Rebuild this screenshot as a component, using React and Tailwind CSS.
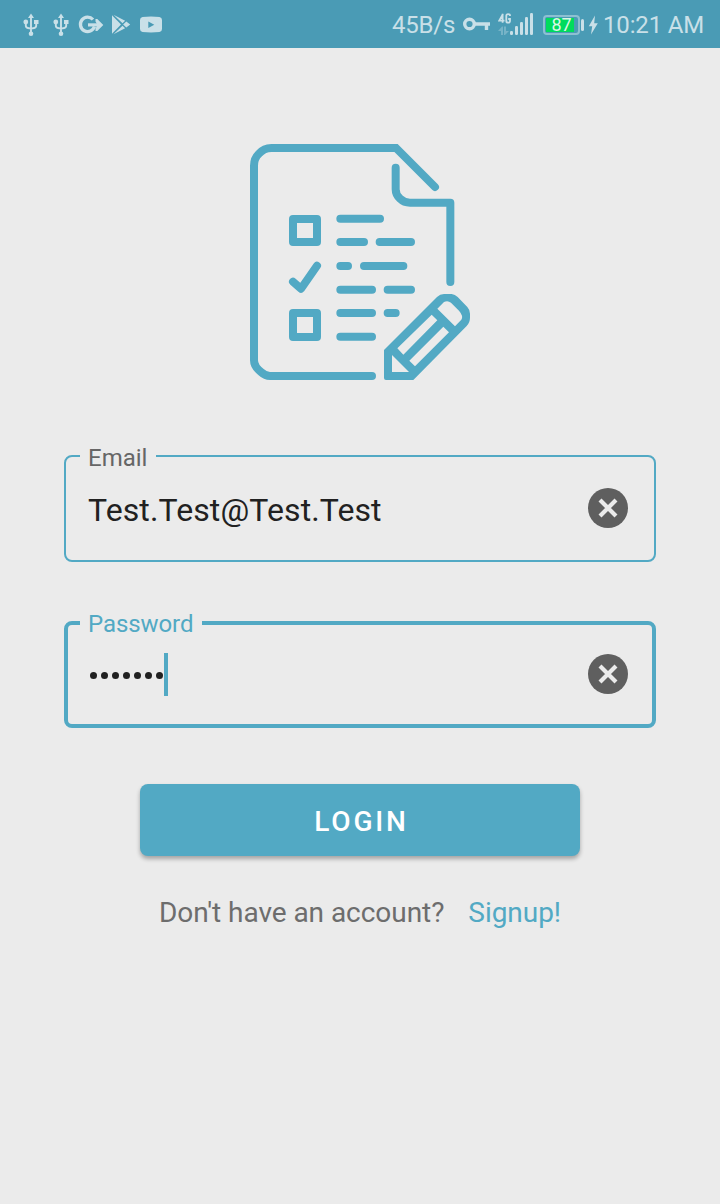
function UsbIcon() {
  return (
    <svg className="h-6 w-[30px]" viewBox="0 0 30 24" fill="none" stroke="currentColor" strokeWidth="1.9">
      <path d="M15 3v18M9.8 9v3.5q0 2.200 2 2.500l3.200.6 3.200-.6q2-.3 2-2.500V9" />
      <path d="M15 .6l3 4.400h-6z" fill="currentColor" stroke="none" />
      <circle cx="9.800" cy="9" r="2.400" fill="currentColor" stroke="none" />
      <path d="M18 7h4.500v4H18z" fill="currentColor" stroke="none" />
      <circle cx="15" cy="20.800" r="2.300" fill="currentColor" stroke="none" />
    </svg>
  );
}

function StatusBar() {
  return (
    <header className="flex h-12 items-center justify-between bg-[#4a9bb5] pl-4 pr-4 text-[#c9e0e8]">
      <div className="flex h-full items-center pt-0.5">
        <UsbIcon />
        <UsbIcon />
        <svg className="h-6 w-[30px]" viewBox="0 0 30 24">
          <path d="M17 6.500A7.200 7.200 0 1 0 18.500 13.500" fill="none" stroke="currentColor" strokeWidth="3.300" />
          <path d="M12 11.900H22" fill="none" stroke="currentColor" strokeWidth="3.200" />
          <path d="M19.500 6h1.800l6 6-6 6h-1.800v-2.500l2-3.500-2-3.500z" fill="currentColor" />
        </svg>
        <svg className="h-6 w-[30px]" viewBox="0 0 30 24" fill="currentColor">
          <path d="M6 2.200v18.600L15 11.500zM7.500 1.800l9 8.400 2.600-2.400zM7.500 21.200l9-8.400 2.600 2.400zM20.300 8.600l-3.200 2.900 3.200 2.900 3.900-2.900z" />
        </svg>
        <svg className="h-6 w-[30px]" viewBox="0 0 30 24">
          <path fillRule="evenodd" fill="currentColor" d="M6.500 4Q15 2.800 23.500 4q2.500.3 2.500 3v9q0 2.600-2.500 3-8.500.8-17 0Q4 18.600 4 16V7q0-2.700 2.500-3zM12.300 8.500v6.500l6-3.200z" />
        </svg>
      </div>
      <div className="flex h-full items-center pt-0.5 text-[24px]">
        <span className="w-[71px] whitespace-nowrap tracking-[-0.2px]">45B/s</span>
        <svg className="h-6 w-7" viewBox="0 0 28 24" fill="none" stroke="currentColor" strokeWidth="3.400">
          <circle cx="6.500" cy="11" r="4.800" />
          <path d="M12 11h15M23.500 11v6" />
        </svg>
        <svg className="ml-[7px] h-6 w-9" viewBox="0 0 36 24" fill="currentColor">
          <path d="M4.600.8v9M5 1L1.200 7.600H6.500M12 3V2.500q0-1.400-1.900-1.400T8.300 3v5q0 1.700 1.800 1.700T12 8V6h-1.800" fill="none" stroke="currentColor" strokeWidth="1.800" />
          <path d="M0 18l4-4.500h1V22H3v-4zM6 13.500h2V18h3l-4 4H6z" opacity=".35" />
          <rect x="12" y="18" width="3" height="4" rx="1.200" />
          <rect x="17" y="13" width="3" height="9" rx="1.200" />
          <rect x="22" y="9" width="3" height="13" rx="1.200" />
          <rect x="27" y="4" width="3" height="18" rx="1.200" />
          <rect x="32" y="0" width="3" height="22" rx="1.200" />
        </svg>
        <div className="ml-[9px] flex h-5 w-[37px] items-center rounded-[4px] border-2 border-[#8dc0d1] p-px">
          <div className="flex h-[14px] w-[28px] items-center justify-center bg-[#00db5c] pl-[3px] text-[18px] leading-none text-[#dcf5e7]">87</div>
        </div>
        <div className="ml-px h-3 w-[3px] rounded-sm bg-current" />
        <svg className="ml-[4px] h-5 w-[10px]" viewBox="0 0 10 20" fill="currentColor">
          <path d="M7 .5L.8 11.300h3.400L3 19.500l6.800-11.300H6.200z" />
        </svg>
        <span className="ml-[5px] w-[101px] whitespace-nowrap tracking-[-0.15px]">10:21 AM</span>
      </div>
    </header>
  );
}

function NotesLogo() {
  return (
    <svg className="h-[255px] w-60" viewBox="0 0 720 765" fill="none" stroke="#52a9c4" strokeWidth="24" strokeLinecap="round">
      <path d="M396 723H90Q76 723 63 711 42 695 42 676V92Q42 70 57 56 72 39 94 39H468L585 156" />
      <path d="M467 98V163Q467 180 480 191 492 203 510 203H631V441" strokeLinejoin="round" />
      <rect x="159" y="252" width="72" height="69" strokeLinejoin="round" />
      <rect x="159" y="534" width="72" height="72" strokeLinejoin="round" />
      <path d="M159 440L183 461 231 392" strokeLinejoin="round" />
      <path d="M301 251H420M301 321H372M419 321H513M301 393H324M372 393H490M301 464H396M443 464H513M301 534H396M443 534H467M301 605H396" />
      <path
        stroke="none"
        fill="#52a9c4"
        fillRule="evenodd"
        d="M432 645L591 486Q600 477 612 477H635Q645 478 653 486L682 516Q690 525 690 536V548Q690 562 680 573L520 735H438Q432 735 432 729ZM592 521L612 501Q623 495 633 503L657 527Q671 543 664 554L645 574ZM575 539L592 556 490 659 472 640ZM610 575L627 592 525 694 508 677ZM456 660V711H507Z"
      />
    </svg>
  );
}

function ClearButton() {
  return (
    <button type="button" aria-label="Clear" className="mb-0.5 size-10">
      <svg className="size-10" viewBox="0 0 40 40">
        <circle cx="20" cy="20" r="20" fill="#5f5f5f" />
        <path d="M12 12L28 28M28 12L12 28" stroke="#ebebeb" strokeWidth="4.200" strokeLinecap="butt" />
      </svg>
    </button>
  );
}

export default function App() {
  return (
    <div className="flex min-h-[1204px] w-[720px] flex-col bg-[#ebebeb] font-['Roboto',sans-serif]">
      <StatusBar />
      <main className="flex flex-col items-center pt-[87px]">
        <NotesLogo />

        <div className="relative mt-[65px] flex h-[107px] w-[592px] items-center justify-between rounded-lg border-2 border-[#52a9c4] pl-[22px] pr-[26px]">
          <span className="absolute -top-[13px] left-[14px] h-7 w-[76px] bg-[#ebebeb] pl-2 text-[24px] leading-7 text-[#666666]">Email</span>
          <span className="pt-[3px] text-[32px] leading-10 tracking-[0.11px] text-[#212121]">Test.Test@Test.Test</span>
          <ClearButton />
        </div>

        <div className="relative mt-[59px] flex h-[107px] w-[592px] items-center justify-between rounded-lg border-4 border-[#52a9c4] pl-5 pr-6">
          <span className="absolute -top-[15px] left-3 h-7 w-[122px] bg-[#ebebeb] pl-2 text-[24px] leading-7 tracking-[-0.08px] text-[#52a9c4]">Password</span>
          <span className="flex items-center">
            <span className="flex w-[76px] gap-1 pl-[2px] pt-px">
              {Array.from({ length: 7 }, (_, i) => (
                <span key={i} className="size-[7px] shrink-0 rounded-full bg-[#212121]" />
              ))}
            </span>
            <span className="h-[43px] w-1 bg-[#52a9c4]" />
          </span>
          <ClearButton />
        </div>

        <button type="button" className="mt-14 h-[72px] w-[440px] rounded-lg bg-[#52a9c4] pl-[3px] pt-1 text-[28px] font-medium tracking-[2.8px] text-white shadow-[0_3px_4px_rgba(0,0,0,0.3)]">
          LOGIN
        </button>

        <p className="mt-[39px] flex gap-6 text-[28px] leading-9 tracking-[-0.05px] text-[#6d6d6d]">
          <span>Don't have an account?</span>
          <a className="text-[#52a9c4]">Signup!</a>
        </p>
      </main>
    </div>
  );
}
